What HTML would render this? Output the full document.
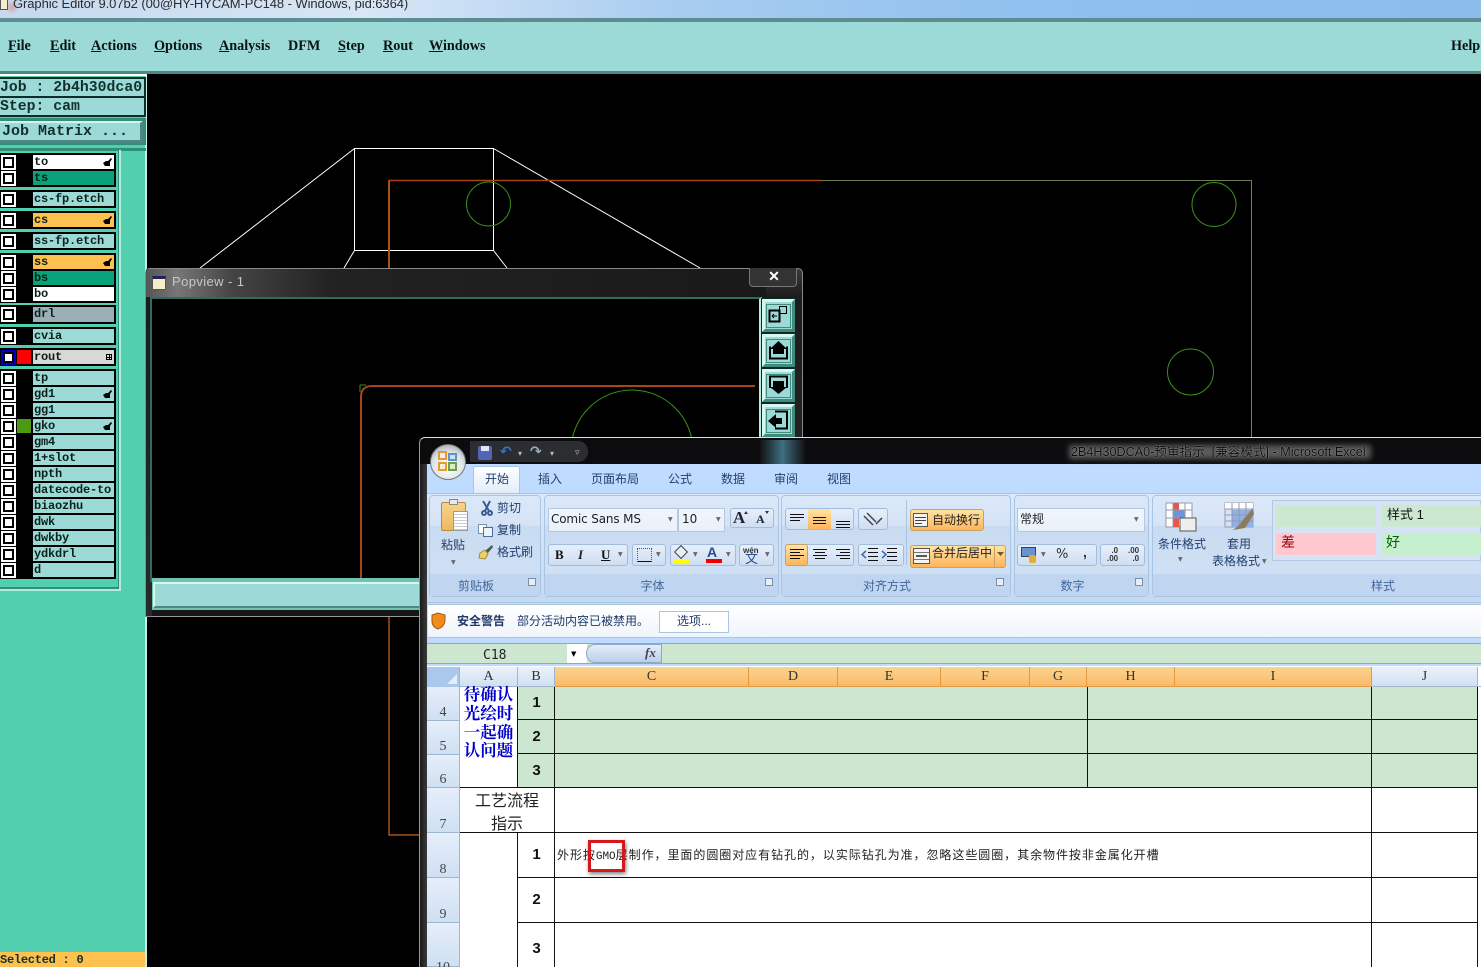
<!DOCTYPE html>
<html><head><meta charset="utf-8"><style>
html,body{margin:0;padding:0;width:1481px;height:967px;overflow:hidden;background:#000}
div,span,b,i,u{position:absolute;display:block;box-sizing:border-box;font-style:normal;white-space:nowrap}
#r{position:absolute;left:0;top:0;width:1481px;height:967px;overflow:hidden;font-family:"Liberation Sans",sans-serif}
.m{top:38px;font:bold 14.2px/16px "Liberation Serif",serif;color:#0a1414}
.m u{position:static;display:inline}
.k{left:0;width:116px;background:#000}
.c{left:1px;width:15px;height:15px;background:#fff;padding:0}
.c:after{content:"";position:absolute;left:2px;top:2px;width:11px;height:11px;border:2px solid #000;background:#fff;box-sizing:border-box}
.l{left:33px;width:81px;height:14px;background:#9cdad8;font:bold 12px/15px "Liberation Mono",monospace;color:#0b2018;padding-left:1px;letter-spacing:-.2px;overflow:hidden}
.z{font-family:"Liberation Sans","WenQuanYi Zen Hei","Noto Sans CJK SC",sans-serif;font-size:12px;line-height:14px;color:#21406f}
.g{top:495px;height:102px;background:linear-gradient(#dbe8f8 0,#d5e3f5 30%,#c9dbf1 30%,#d3e3f5 100%);border:1px solid #a9c5e4;border-radius:4px}
.gc{left:0;right:18px;bottom:-1px;height:22px;text-align:center;line-height:22px;color:#41659b;font-family:"Liberation Sans","WenQuanYi Zen Hei",sans-serif;font-size:12px}
.gb{left:0;right:0;bottom:0;height:22px;background:#c0d6f0}
.btn{background:linear-gradient(#e6effb,#cfdef2);border:1px solid #a3bcdc;border-radius:3px}
.on{background:linear-gradient(#ffe3a4,#fdb55c);border:1px solid #c9a261;border-radius:3px}
.hd{top:667px;height:20px;background:linear-gradient(#fbd48e,#f8b968);border-right:1px solid #e49a44;text-align:center;font:14px/20px "Liberation Serif",serif;color:#333}
.hn{top:667px;height:20px;background:linear-gradient(#eaf2fb,#d0dff0);border-right:1px solid #9eb6ce;text-align:center;font:14px/20px "Liberation Serif",serif;color:#333}
.rh{left:427px;width:33px;background:linear-gradient(#e6eefa,#cfe0f3);border-bottom:1px solid #9eb6ce;border-right:1px solid #9eb6ce;text-align:center;font:14px/14px "Liberation Serif",serif;color:#444}
.rh span{left:0;right:0;bottom:0}
.n{left:518px;width:37px;text-align:center;font:bold 15px/18px "Liberation Sans",sans-serif;color:#111}
.tb{left:762px;width:33px;background:#9cdad8;border:3px solid;border-color:#d8f5ee #3f8c7e #3f8c7e #d8f5ee;outline:1px solid #0a2a26}
.dd{color:#666;font:6px/8px 'DejaVu Sans',sans-serif}
</style></head><body><div id="r">

<svg style="position:absolute;left:0;top:0" width="1481" height="967" fill="none">
<path d="M354.5 148.5H493.5V250.5H354.5ZM354.5 148.5L200 268M493.5 148.5L700 268M354.5 250.5L344 268M493.5 250.5L507 268" stroke="#fff"/>
<path d="M389 268V181" stroke="#a8531c" stroke-width="2"/>
<path d="M388 180.5H822" stroke="#a8441a" stroke-width="1.5"/>
<path d="M822 180.5H1251.5V437" stroke="#6f7f50"/>
<path d="M389 617V835H420" stroke="#a8531c" stroke-width="1.5"/>
<circle cx="488.5" cy="204" r="22" stroke="#3b8f1a"/>
<circle cx="1214" cy="204.5" r="22" stroke="#3b8f1a"/>
<circle cx="1190.5" cy="372" r="23" stroke="#3b8f1a"/>
</svg>

<!-- title bar -->
<div style="left:0;top:0;width:1481px;height:18px;background:linear-gradient(90deg,#c5d8ee 0,#d8e6f6 25%,#a9cdf0 45%,#8fc0ee 70%,#8bbcec 100%)"></div>
<div style="left:4px;top:0;width:16px;height:14px;background:radial-gradient(circle,rgba(220,120,110,.5),rgba(220,120,110,0) 70%)"></div>
<div style="left:0;top:-3px;width:8px;height:13px;background:#f4efc8;border:1px solid #555"></div>
<div style="left:13px;top:-3px;font:13px/14px 'Liberation Sans',sans-serif;color:#2b2b2b;letter-spacing:-.08px">Graphic Editor 9.07b2 (00@HY-HYCAM-PC148 - Windows, pid:6364)</div>
<div style="left:0;top:18px;width:1481px;height:4px;background:#5d8c92"></div>
<div style="left:0;top:22px;width:1481px;height:49px;background:#9cdad8"></div>
<div style="left:0;top:71px;width:1481px;height:3px;background:#4d8883"></div>
<div style="left:0;top:74px;width:147px;height:2px;background:#fff"></div>
<div class="m" style="left:8px"><u>F</u>ile</div>
<div class="m" style="left:50px"><u>E</u>dit</div>
<div class="m" style="left:91px"><u>A</u>ctions</div>
<div class="m" style="left:154px"><u>O</u>ptions</div>
<div class="m" style="left:219px"><u>A</u>nalysis</div>
<div class="m" style="left:288px">DFM</div>
<div class="m" style="left:338px"><u>S</u>tep</div>
<div class="m" style="left:383px"><u>R</u>out</div>
<div class="m" style="left:429px"><u>W</u>indows</div>
<div class="m" style="left:1451px">Help</div>

<!-- sidebar -->
<div style="left:0;top:76px;width:147px;height:891px;background:#52cfae"></div>
<div style="left:145px;top:76px;width:2px;height:891px;background:#cdeee6"></div>
<div style="left:0;top:77px;width:146px;height:40px;background:#0c2d28"></div>
<div style="left:0;top:79px;width:144px;height:17px;background:#9cdad8;font:bold 14.8px/18px 'Liberation Mono',monospace;color:#12302a">Job : 2b4h30dca0</div>
<div style="left:0;top:98px;width:144px;height:17px;background:#9cdad8;font:bold 14.8px/18px 'Liberation Mono',monospace;color:#12302a">Step: cam</div>
<div style="left:0;top:118px;width:146px;height:27px;background:#2f8f78"></div>
<div style="left:0;top:121px;width:143px;height:22px;background:#9cdad8;border-right:3px solid #4d8883;border-bottom:3px solid #4d8883;border-top:2px solid #d5f3ee;font:bold 15px/18px 'Liberation Mono',monospace;color:#12302a;padding-left:2px">Job Matrix ...</div>
<div style="left:0;top:148px;width:146px;height:3px;background:#2f8f78"></div>
<div style="left:119px;top:150px;width:2px;height:440px;background:#b5ebdb"></div>
<div style="left:0;top:589px;width:121px;height:2px;background:#b5ebdb"></div>
<div style="left:118px;top:150px;width:1px;height:439px;background:#2f8f78"></div>
<div style="left:0;top:587px;width:118px;height:2px;background:#2f8f78"></div>

<div class="k" style="top:153px;height:34px"></div>
<div class="k" style="top:190px;height:18px"></div>
<div class="k" style="top:211px;height:18px"></div>
<div class="k" style="top:232px;height:18px"></div>
<div class="k" style="top:253px;height:50px"></div>
<div class="k" style="top:305px;height:19px"></div>
<div class="k" style="top:327px;height:18px"></div>
<div class="k" style="top:348px;height:18px"></div>
<div class="k" style="top:369px;height:210px"></div>

<b class="c" style="top:155px"></b><div class="l" style="top:155px;background:#fff">to<svg style="position:absolute;right:2px;top:3px" width="9" height="9" viewBox="0 0 9 9"><path d="M0 5L3 3H5L8 0L9 1L7 4V8H2Z" fill="#000"/></svg></div>
<b class="c" style="top:171px"></b><div class="l" style="top:171px;background:#0aa27a">ts</div>
<b class="c" style="top:192px"></b><div class="l" style="top:192px">cs-fp.etch</div>
<b class="c" style="top:213px"></b><div class="l" style="top:213px;background:#fdc14f">cs<svg style="position:absolute;right:2px;top:3px" width="9" height="9" viewBox="0 0 9 9"><path d="M0 5L3 3H5L8 0L9 1L7 4V8H2Z" fill="#000"/></svg></div>
<b class="c" style="top:234px"></b><div class="l" style="top:234px">ss-fp.etch</div>
<b class="c" style="top:255px"></b><div class="l" style="top:255px;background:#fdc14f">ss<svg style="position:absolute;right:2px;top:3px" width="9" height="9" viewBox="0 0 9 9"><path d="M0 5L3 3H5L8 0L9 1L7 4V8H2Z" fill="#000"/></svg></div>
<b class="c" style="top:271px"></b><div class="l" style="top:271px;background:#0aa27a">bs</div>
<b class="c" style="top:287px"></b><div class="l" style="top:287px;background:#fff">bo</div>
<b class="c" style="top:307px"></b><div class="l" style="top:307px;height:15px;background:#9ab0b6">drl</div>
<b class="c" style="top:329px"></b><div class="l" style="top:329px">cvia</div>
<b class="c" style="top:350px;background:#00c"></b><div style="left:3px;top:352px;width:11px;height:11px;background:#fff;border:2px solid #000"></div>
<div style="left:17px;top:350px;width:14px;height:14px;background:#f00"></div>
<div class="l" style="top:350px;background:#d8d8d8">rout<div style="right:2px;top:4px;width:6px;height:6px;border:1px solid #000;background:linear-gradient(#000,#000) center/4px 1px no-repeat,linear-gradient(#000,#000) center/1px 4px no-repeat"></div></div>
<b class="c" style="top:371px"></b><div class="l" style="top:371px">tp</div>
<b class="c" style="top:387px"></b><div class="l" style="top:387px">gd1<svg style="position:absolute;right:2px;top:3px" width="9" height="9" viewBox="0 0 9 9"><path d="M0 5L3 3H5L8 0L9 1L7 4V8H2Z" fill="#000"/></svg></div>
<b class="c" style="top:403px"></b><div class="l" style="top:403px">gg1</div>
<b class="c" style="top:419px"></b><div style="left:17px;top:419px;width:14px;height:14px;background:#4c9a10"></div><div class="l" style="top:419px">gko<svg style="position:absolute;right:2px;top:3px" width="9" height="9" viewBox="0 0 9 9"><path d="M0 5L3 3H5L8 0L9 1L7 4V8H2Z" fill="#000"/></svg></div>
<b class="c" style="top:435px"></b><div class="l" style="top:435px">gm4</div>
<b class="c" style="top:451px"></b><div class="l" style="top:451px">1+slot</div>
<b class="c" style="top:467px"></b><div class="l" style="top:467px">npth</div>
<b class="c" style="top:483px"></b><div class="l" style="top:483px">datecode-to</div>
<b class="c" style="top:499px"></b><div class="l" style="top:499px">biaozhu</div>
<b class="c" style="top:515px"></b><div class="l" style="top:515px">dwk</div>
<b class="c" style="top:531px"></b><div class="l" style="top:531px">dwkby</div>
<b class="c" style="top:547px"></b><div class="l" style="top:547px">ydkdrl</div>
<b class="c" style="top:563px"></b><div class="l" style="top:563px">d</div>
<div style="left:0;top:952px;width:145px;height:15px;background:#fdc14f;font:bold 12px/16px 'Liberation Mono',monospace;color:#12302a;letter-spacing:-.25px">Selected : 0</div>

<!-- popview -->
<div style="left:145px;top:268px;width:658px;height:349px;background:linear-gradient(#3a3a3a,#1c1c1c 8%,#2a2a2a);border:1px solid #8a8a8a;border-radius:5px 5px 0 0"></div>
<div style="left:146px;top:269px;width:620px;height:28px;background:linear-gradient(90deg,#555 0,#777 5%,#444 14%,#222 30%,#191919 100%)"></div>
<div style="left:152px;top:276px;width:14px;height:14px;background:#f4efc8;border:1px solid #555;border-top:3px solid #225"></div>
<div style="left:172px;top:274px;font:13px/16px 'Liberation Sans',sans-serif;color:#c8c8c8;letter-spacing:.4px">Popview - 1</div>
<div style="left:749px;top:268px;width:48px;height:19px;border:1px solid #777;border-top:none;border-radius:0 0 4px 4px;background:#333;color:#fff;text-align:center;font:bold 14px/16px 'Liberation Sans',sans-serif;padding-left:2px">✕</div>
<div style="left:150px;top:297px;width:612px;height:285px;background:#000;border:2px solid #2f6b60;border-right:3px solid #b5ebdb"></div>
<svg style="position:absolute;left:0;top:0" width="1481" height="967" fill="none">
<path d="M361 578V397Q361 386 372 386H755" stroke="#a8441a" stroke-width="2"/>
<path d="M360 385V392M360 385H366" stroke="#3b8f1a"/>
<circle cx="632" cy="451" r="61" stroke="#3b8f1a"/>
</svg>
<div style="left:152px;top:578px;width:270px;height:32px;background:#6fc3b1"></div>
<div style="left:153px;top:582px;width:268px;height:26px;background:#9cdad8;border:2px solid;border-color:#d8f5ee #4d8883 #4d8883 #d8f5ee"></div>
<div style="left:152px;top:610px;width:270px;height:7px;background:#161616;border-bottom:1px solid #999"></div>
<div class="tb" style="top:299px;height:33px"></div>
<div class="tb" style="top:334px;height:33px"></div>
<div class="tb" style="top:369px;height:33px"></div>
<div class="tb" style="top:404px;height:33px"></div>
<svg style="position:absolute;left:0;top:0" width="1481" height="967" fill="none" stroke="#000">
<path d="M766.5 304.5H790.5V327.5H766.5Z" stroke="#3f8c7e"/>
<path d="M769.5 310.5H779.5V321.5H769.5Z" stroke-width="2"/><path d="M779.5 306.5H786.5V313.5H779.5Z"/><path d="M772 316H777M772 316L774 314M772 316L774 318"/>
<path d="M766.5 339.5H790.5V362.5H766.5Z" stroke="#3f8c7e"/>
<path d="M770 346.5V358.5H787V346.5" stroke-width="2"/><path d="M773 354H784V349H787L778.5 341L770 349H773Z" fill="#000" stroke="none"/>
<path d="M766.5 374.5H790.5V397.5H766.5Z" stroke="#3f8c7e"/>
<path d="M770 388V376.5H787V388" stroke-width="2"/><path d="M773 381H784V387H787L778.5 394L770 387H773Z" fill="#000" stroke="none"/>
<path d="M766.5 409.5H790.5V432.5H766.5Z" stroke="#3f8c7e"/>
<path d="M775 411.5H787V428.5H775" stroke-width="2"/><path d="M782 418V424H776V428L768 421L776 414V418Z" fill="#000" stroke="none"/>
</svg>

<!-- excel -->
<div style="left:419px;top:437px;width:1062px;height:530px;background:#0c0c0e;border-left:1px solid #999;border-top:1px solid #ddd;border-radius:6px 0 0 0"></div>
<div style="left:760px;top:440px;width:45px;height:24px;background:linear-gradient(90deg,#111,#3f6f80,#111)"></div>
<div style="left:470px;top:441px;width:118px;height:21px;background:#2b2d31;border-radius:0 10px 10px 0"></div>
<div style="left:427px;top:464px;width:1054px;height:503px;background:#bfdbff"></div>
<div style="left:420px;top:464px;width:7px;height:503px;background:linear-gradient(90deg,#1a1a1a,#3a3a3a)"></div>
<div style="left:430px;top:444px;width:36px;height:36px;border-radius:50%;background:radial-gradient(circle at 50% 65%,#fff,#dfe3e8 55%,#8a8f96);border:1px solid #777"></div>
<div style="left:438px;top:451px;width:9px;height:9px;background:#f2f2f2;border:2px solid #e9973a"></div>
<div style="left:448px;top:453px;width:9px;height:8px;background:#cfe0ef;border:2px solid #5d93c9"></div>
<div style="left:438px;top:462px;width:9px;height:9px;background:#f8efd0;border:2px solid #dba02e"></div>
<div style="left:448px;top:462px;width:9px;height:9px;background:#dcedc8;border:2px solid #6ea04a"></div>
<div style="left:478px;top:446px;width:14px;height:14px;background:#5463b5;border-radius:2px"></div>
<div style="left:481px;top:446px;width:8px;height:5px;background:#dfe6f5"></div>
<div style="left:500px;top:445px;color:#3a70c0;font:bold 14px/15px 'DejaVu Sans',sans-serif">↶</div>
<div style="left:530px;top:445px;color:#8fb0c2;font:bold 14px/15px 'DejaVu Sans',sans-serif">↷</div>
<div style="left:518px;top:449px;color:#bbb;font:8px/10px 'DejaVu Sans',sans-serif">▾</div>
<div style="left:550px;top:449px;color:#bbb;font:8px/10px 'DejaVu Sans',sans-serif">▾</div>
<div style="left:575px;top:448px;color:#bbb;font:9px/10px 'DejaVu Sans',sans-serif">▿</div>
<div style="left:1069px;top:445px;width:302px;height:14px;background:#5a5a5a;filter:blur(3px)"></div>
<div class="z" style="left:1071px;top:445px;color:#0c0c0c;text-shadow:0 0 1px #bbb;font-size:12.6px">2B4H30DCA0-预审指示&nbsp; [兼容模式] - Microsoft Excel</div>

<!-- tabs -->
<div style="left:473px;top:466px;width:47px;height:28px;background:linear-gradient(#fff,#e0ecfa);border:1px solid #a9c5e4;border-bottom:none;border-radius:3px 3px 0 0"></div>
<div class="z" style="left:485px;top:472px;">开始</div>
<div class="z" style="left:538px;top:472px;">插入</div>
<div class="z" style="left:591px;top:472px;">页面布局</div>
<div class="z" style="left:668px;top:472px;">公式</div>
<div class="z" style="left:721px;top:472px;">数据</div>
<div class="z" style="left:774px;top:472px;">审阅</div>
<div class="z" style="left:827px;top:472px;">视图</div>

<!-- ribbon -->
<div style="left:427px;top:493px;width:1054px;height:110px;background:linear-gradient(#dce9fa,#c5daf3);border-top:1px solid #a9c5e4;border-bottom:1px solid #a9c5e4"></div>
<div class="g" style="left:429px;width:112px"><div class="gb"></div><div class="gc">剪贴板</div></div>
<div class="g" style="left:544px;width:235px"><div class="gb"></div><div class="gc">字体</div></div>
<div class="g" style="left:781px;width:230px"><div class="gb"></div><div class="gc">对齐方式</div></div>
<div class="g" style="left:1014px;width:135px"><div class="gb"></div><div class="gc">数字</div></div>
<div class="g" style="left:1152px;width:462px"><div class="gb"></div><div class="gc" style="right:0">样式</div></div>

<!-- clipboard -->
<div style="left:441px;top:502px;width:25px;height:29px;background:linear-gradient(#f6d48c,#eeb860);border:1px solid #b98a46;border-radius:2px"></div>
<div style="left:449px;top:499px;width:9px;height:6px;background:#e8e8e8;border:1px solid #888"></div>
<div style="left:453px;top:511px;width:15px;height:20px;background:repeating-linear-gradient(#fff 0 2px,#ccc 2px 3px);border:1px solid #999"></div>
<div class="z" style="left:441px;top:538px;color:#2a3f66">粘贴</div>
<div class="dd" style="left:451px;top:559px">▼</div>
<svg style="position:absolute;left:480px;top:500px" width="14" height="16" fill="none" stroke="#3d5c96" stroke-width="2"><path d="M3 1L9 11M10 1L5 11"/><circle cx="4" cy="13" r="2"/><circle cx="10" cy="13" r="2"/></svg>
<div class="z" style="left:497px;top:501px">剪切</div>
<div style="left:478px;top:524px;width:9px;height:10px;background:#fff;border:1px solid #7d8fae"></div>
<div style="left:483px;top:527px;width:10px;height:10px;background:#eef3fa;border:1px solid #4d6b9c"></div>
<div class="z" style="left:497px;top:523px">复制</div>
<svg style="position:absolute;left:478px;top:544px" width="16" height="16"><path d="M7 7L14 1L15 3L10 9Z" fill="#555"/><path d="M2 9L7 6L10 10L7 15L1 14Z" fill="#ecd06a" stroke="#a88a2a"/></svg>
<div class="z" style="left:497px;top:545px">格式刷</div>
<div style="left:528px;top:578px;width:8px;height:8px;background:#e8eef6;border:1px solid #7d8fae"></div>

<!-- font -->
<div style="left:548px;top:508px;width:130px;height:24px;background:linear-gradient(#f1f6fc,#e8f0fa);border:1px solid #b4c8e2"></div>
<div style="left:678px;top:508px;width:47px;height:24px;background:linear-gradient(#f1f6fc,#e8f0fa);border:1px solid #b4c8e2"></div>
<div style="left:551px;top:512px;font:12px/14px 'DejaVu Sans',sans-serif;color:#222;letter-spacing:-.15px">Comic Sans MS</div>
<div style="left:682px;top:512px;font:12px/14px 'DejaVu Sans',sans-serif;color:#222">10</div>
<div class="dd" style="left:668px;top:516px">▼</div>
<div class="dd" style="left:716px;top:516px">▼</div>
<div class="btn" style="left:730px;top:508px;width:44px;height:20px"></div>
<div style="left:733px;top:509px;font:bold 17px/18px 'Liberation Serif',serif;color:#223">A</div>
<div style="left:756px;top:512px;font:bold 12px/15px 'Liberation Serif',serif;color:#223">A</div>
<svg style="position:absolute;left:0;top:0" width="1481" height="967" fill="#334"><path d="M744 514L746 511L748 514ZM765 511L769 511L767 514Z"/></svg>
<div class="btn" style="left:548px;top:544px;width:80px;height:22px"></div>
<div style="left:555px;top:546px;font:bold 13px/17px 'Liberation Serif',serif;color:#111">B</div>
<div style="left:578px;top:546px;font:italic bold 13px/17px 'Liberation Serif',serif;color:#222">I</div>
<div style="left:601px;top:546px;font:bold 13px/17px 'Liberation Serif',serif;color:#111;text-decoration:underline">U</div>
<div class="dd" style="left:618px;top:551px">▼</div>
<div class="btn" style="left:632px;top:544px;width:34px;height:22px"></div>
<div style="left:637px;top:548px;width:15px;height:14px;border:1px dotted #555;border-bottom:1px solid #111"></div>
<div class="dd" style="left:656px;top:551px">▼</div>
<div class="btn" style="left:670px;top:544px;width:66px;height:22px"></div>
<div style="left:676px;top:547px;width:10px;height:10px;transform:rotate(45deg);background:#e8eef6;border:1px solid #444"></div>
<div style="left:674px;top:559px;width:16px;height:4px;background:#ff0"></div>
<div class="dd" style="left:693px;top:551px">▼</div>
<div style="left:707px;top:545px;font:bold 14px/15px 'Liberation Sans',sans-serif;color:#2b4c8c">A</div>
<div style="left:706px;top:559px;width:16px;height:4px;background:#e00"></div>
<div class="dd" style="left:726px;top:551px">▼</div>
<div class="btn" style="left:739px;top:544px;width:35px;height:22px"></div>
<div style="left:743px;top:546px;font:bold 8px/9px 'Liberation Sans',sans-serif;color:#333">wén</div>
<div class="z" style="left:745px;top:552px;color:#2b4c8c;font-size:13px">文</div>
<div class="dd" style="left:765px;top:551px">▼</div>
<div style="left:765px;top:578px;width:8px;height:8px;background:#e8eef6;border:1px solid #7d8fae"></div>

<!-- align -->
<div class="btn" style="left:785px;top:508px;width:69px;height:22px"></div>
<div class="on" style="left:808px;top:509px;width:23px;height:20px;border:none;border-radius:0"></div>
<div class="btn" style="left:858px;top:508px;width:30px;height:22px"></div>
<div class="on" style="left:910px;top:509px;width:74px;height:22px"></div>
<div class="z" style="left:932px;top:513px;color:#222">自动换行</div>
<div class="btn" style="left:785px;top:544px;width:69px;height:22px"></div>
<div class="on" style="left:785px;top:544px;width:23px;height:22px"></div>
<div class="btn" style="left:858px;top:544px;width:46px;height:22px"></div>
<div class="on" style="left:910px;top:545px;width:96px;height:23px"></div>
<div style="left:994px;top:546px;width:1px;height:21px;background:#c9a261"></div>
<div class="z" style="left:932px;top:546px;color:#222">合并后居中</div>
<svg style="position:absolute;left:0;top:0" width="1481" height="967" fill="none" stroke="#111">
<path d="M790 514.5H804M790 517.5H804M790 520.5H800M813 517.5H826M813 520.5H826M813 523.5H826M836 521.5H850M836 524.5H850M836 527.5H850"/>
<path d="M790 549.5H804M790 552.5H800M790 555.5H804M790 558.5H800M813 549.5H827M815 552.5H825M813 555.5H827M815 558.5H825M836 549.5H850M840 552.5H850M836 555.5H850M840 558.5H850"/>
<path d="M868 548.5H878M868 552.5H878M868 556.5H878M868 560.5H878M887 548.5H897M887 552.5H897M887 556.5H897M887 560.5H897"/>
<path d="M866 551L862 554.5L866 558M882 551L886 554.5L882 558" stroke="#3d6cb0" stroke-width="1.5"/>
<path d="M864 516L873 525M867 513L876 522M876 524L882 518" stroke="#444" stroke-width="1.5"/>
<path d="M913.5 513.5H927.5V526.5H913.5Z" fill="#f4f4f4" stroke="#555"/><path d="M915 517.5H926M915 520.5H926M915 523.5H922" stroke="#444"/>
<path d="M913.5 548.5H929.5V563.5H913.5Z" fill="#f4f4f4" stroke="#555"/><path d="M914 552.5H929M914 559.5H929" stroke="#777"/><path d="M916 556H927" stroke="#222" stroke-width="1.5"/>
<path d="M997 552H1004L1000.5 556Z" fill="#6b5a30" stroke="none"/>
</svg>
<div style="left:906px;top:500px;width:1px;height:65px;background:#a9c5e4"></div>

<!-- number -->
<div style="left:1017px;top:508px;width:128px;height:24px;background:linear-gradient(#f1f6fc,#e8f0fa);border:1px solid #b4c8e2"></div>
<div class="z" style="left:1020px;top:512px;color:#222">常规</div>
<div class="dd" style="left:1134px;top:516px">▼</div>
<div class="btn" style="left:1017px;top:544px;width:80px;height:22px"></div>
<div style="left:1021px;top:547px;width:15px;height:10px;background:#6b93d0;border:1px solid #345"></div>
<div style="left:1029px;top:555px;width:7px;height:8px;background:#e0b030;border-radius:2px"></div>
<div class="dd" style="left:1041px;top:551px">▼</div>
<div style="left:1056px;top:547px;font:13px/15px 'DejaVu Sans',sans-serif;color:#333">%</div>
<div style="left:1083px;top:545px;font:bold 14px/15px 'Liberation Sans',sans-serif;color:#333">,</div>
<div class="btn" style="left:1100px;top:544px;width:45px;height:22px"></div>
<div style="left:1107px;top:547px;font:bold 8px/8px 'Liberation Sans',sans-serif;color:#333;text-align:right">.0<br>.00</div>
<div style="left:1128px;top:547px;font:bold 8px/8px 'Liberation Sans',sans-serif;color:#333;text-align:right">.00<br>.0</div>
<div style="left:1135px;top:578px;width:8px;height:8px;background:#e8eef6;border:1px solid #7d8fae"></div>
<div style="left:996px;top:578px;width:8px;height:8px;background:#e8eef6;border:1px solid #7d8fae"></div>

<!-- styles -->
<svg style="position:absolute;left:1165px;top:502px" width="32" height="30"><rect x="1" y="1" width="26" height="24" fill="#fff" stroke="#99a"/><rect x="8" y="1" width="6" height="24" fill="#e4564a"/><rect x="8" y="8" width="12" height="8" fill="#6a94dc"/><path d="M1 8H27M1 16H27M8 1V25M20 1V25" stroke="#99a"/><rect x="15" y="16" width="16" height="13" fill="#eee" stroke="#555"/></svg>
<svg style="position:absolute;left:1224px;top:502px" width="32" height="30"><rect x="1" y="1" width="28" height="24" fill="#d5e2f7" stroke="#99a"/><rect x="1" y="1" width="28" height="6" fill="#fff"/><rect x="8" y="8" width="21" height="17" fill="#8fb0e8"/><path d="M1 7H29M1 13H29M1 19H29M8 1V25M15 1V25M22 1V25" stroke="#99a"/><path d="M29 6L14 24L9 28L21 26L30 12Z" fill="#8d7c5c"/></svg>
<div class="z" style="left:1158px;top:537px">条件格式</div>
<div class="dd" style="left:1178px;top:556px">▼</div>
<div class="z" style="left:1227px;top:537px">套用</div>
<div class="z" style="left:1212px;top:554px">表格格式</div>
<div class="dd" style="left:1262px;top:558px">▼</div>
<div style="left:1272px;top:500px;width:209px;height:61px;background:#d5e3f5;border:1px solid #b4c8e2"></div>
<div style="left:1276px;top:505px;width:100px;height:22px;background:#cde8d0"></div>
<div style="left:1382px;top:505px;width:99px;height:22px;background:#cde8d0"></div>
<div style="left:1276px;top:533px;width:100px;height:22px;background:#ffc7ce"></div>
<div style="left:1382px;top:533px;width:99px;height:22px;background:#c6efce"></div>
<div class="z" style="left:1387px;top:508px;color:#111;font-size:13px">样式 1</div>
<div class="z" style="left:1281px;top:535px;color:#9c0006;font-size:14px">差</div>
<div class="z" style="left:1386px;top:535px;color:#006100;font-size:14px">好</div>

<!-- security bar -->
<div style="left:428px;top:604px;width:1053px;height:34px;background:linear-gradient(#fff,#f0f5fb);border-top:1px solid #a9c5e4;border-bottom:1px solid #a9c5e4"></div>
<svg style="position:absolute;left:431px;top:612px" width="15" height="18"><path d="M7 1L14 3V9Q13 15 7 17Q1 15 1 9V3Z" fill="#f28a1e" stroke="#a85a10"/></svg>
<div class="z" style="left:457px;top:614px;color:#1f3a68;font-weight:bold">安全警告</div>
<div class="z" style="left:517px;top:614px;color:#1f3a68">部分活动内容已被禁用。</div>
<div style="left:659px;top:611px;width:70px;height:22px;background:#fff;border:1px solid #a9c5e4;text-align:center;line-height:19px;font-family:'Liberation Sans','WenQuanYi Zen Hei',sans-serif;font-size:12px;color:#1f3a68">选项...</div>

<!-- formula bar -->
<div style="left:427px;top:643px;width:1054px;height:21px;background:#cde6cf;border-top:1px solid #8fa9c4;border-bottom:1px solid #8fa9c4"></div>
<div style="left:483px;top:647px;font:13px/17px 'DejaVu Sans Mono','Liberation Mono',monospace;color:#222;">C18</div>
<div style="left:567px;top:644px;width:20px;height:19px;background:#fff"></div>
<div style="left:571px;top:650px;color:#000;font:7px/8px 'DejaVu Sans',sans-serif">▼</div>
<div style="left:586px;top:644px;width:76px;height:19px;background:linear-gradient(#e5eefb,#bccfe8);border:1px solid #8fa9c4;border-radius:9px 0 0 9px"></div>
<div style="left:645px;top:645px;font:italic bold 13px/16px 'Liberation Serif',serif;color:#445">fx</div>

<!-- grid -->
<div style="left:427px;top:666px;width:1054px;height:301px;background:#fff"></div>
<div style="left:427px;top:667px;width:33px;height:20px;background:#a9c8ec;border-right:1px solid #9eb6ce"></div>
<svg style="position:absolute;left:446px;top:673px" width="12" height="12"><path d="M11 1V11H1Z" fill="#e4edf8"/></svg>
<div class="hn" style="left:460px;width:58px">A</div>
<div class="hn" style="left:518px;width:37px">B</div>
<div class="hd" style="left:555px;width:194px">C</div>
<div class="hd" style="left:749px;width:89px">D</div>
<div class="hd" style="left:838px;width:103px">E</div>
<div class="hd" style="left:941px;width:89px">F</div>
<div class="hd" style="left:1030px;width:57px">G</div>
<div class="hd" style="left:1087px;width:88px">H</div>
<div class="hd" style="left:1175px;width:197px">I</div>
<div class="hn" style="left:1372px;width:106px">J</div>
<div style="left:460px;top:686px;width:1021px;height:1px;background:#9eb6ce"></div>
<div style="left:555px;top:686px;width:817px;height:1px;background:#e49a44"></div>

<div class="rh" style="top:687px;height:34px"><span>4</span></div>
<div class="rh" style="top:721px;height:34px"><span>5</span></div>
<div class="rh" style="top:755px;height:33px"><span>6</span></div>
<div class="rh" style="top:788px;height:45px"><span>7</span></div>
<div class="rh" style="top:833px;height:45px"><span>8</span></div>
<div class="rh" style="top:878px;height:45px"><span>9</span></div>
<div class="rh" style="top:923px;height:44px"><span style="bottom:-9px">10</span></div>

<div style="left:518px;top:687px;width:960px;height:101px;background:#cde6cf"></div>
<svg style="position:absolute;left:0;top:0" width="1481" height="967" fill="none" stroke="#111">
<path d="M517.5 687V788M554.5 687V967M1087.5 687V788M1371.5 687V967M1477.5 687V967"/>
<path d="M518 719.5H1478M518 753.5H1478M460 787.5H1478M460 832.5H1478M518 877.5H1478M518 922.5H1478M517.5 832V967"/>
</svg>
<div style="left:460px;top:684px;width:57px;height:76px;overflow:hidden;text-align:center;font:bold 16.5px/18.8px 'Noto Serif CJK SC','Noto Sans CJK SC',serif;color:#00c">待确认<br>光绘时<br>一起确<br>认问题</div>
<div class="n" style="top:694px">1</div>
<div class="n" style="top:728px">2</div>
<div class="n" style="top:762px">3</div>
<div class="n" style="top:846px">1</div>
<div class="n" style="top:891px">2</div>
<div class="n" style="top:940px">3</div>
<div style="left:460px;top:788px;width:94px;height:44px;overflow:hidden;text-align:center;font:16px/23px 'Noto Sans CJK SC',sans-serif;font-weight:400;color:#222">工艺流程<br>指示</div>
<div style="left:557px;top:848px;font:12px/16px 'Liberation Mono','WenQuanYi Zen Hei','Noto Sans CJK SC',monospace;color:#222;letter-spacing:.95px">外形按<tt style="font:11px/16px 'Liberation Mono',monospace;letter-spacing:0">GMO</tt>层制作，里面的圆圈对应有钻孔的，以实际钻孔为准，忽略这些圆圈，其余物件按非金属化开槽</div>
<div style="left:588px;top:840px;width:37px;height:32px;border:3px solid #d8171c;box-shadow:1px 2px 4px rgba(0,0,0,.5)"></div>
</div></body></html>
